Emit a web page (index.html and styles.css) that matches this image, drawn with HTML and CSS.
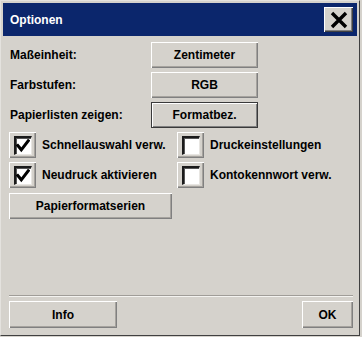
FILE: index.html
```html
<!DOCTYPE html>
<html>
<head>
<meta charset="utf-8">
<link rel="stylesheet" href="styles.css">
</head>
<body>
<div class="window">
  <div class="titlebar">
    <span class="title">Optionen</span>
    <button class="close"><svg width="18" height="18" viewBox="0 0 18 18"><path d="M2 2 L16 16 M16 2 L2 16" stroke="#000" stroke-width="3.4" fill="none"/></svg></button>
  </div>
  <div class="content">
    <div class="settings">
      <div class="label">Maßeinheit:</div><button class="btn">Zentimeter</button>
      <div class="label">Farbstufen:</div><button class="btn">RGB</button>
      <div class="label">Papierlisten zeigen:</div><button class="btn default">Formatbez.</button>
    </div>
    <div class="checks">
      <div class="check"><span class="cb"><span class="box"><svg width="14" height="14" viewBox="0 0 14 14"><path d="M1.8 6.5 L5.3 10.8 L12.2 1.8" stroke="#000" stroke-width="3" fill="none" stroke-linecap="square"/></svg></span></span><span>Schnellauswahl verw.</span></div>
      <div class="check"><span class="cb"><span class="box"></span></span><span>Druckeinstellungen</span></div>
      <div class="check"><span class="cb"><span class="box"><svg width="14" height="14" viewBox="0 0 14 14"><path d="M1.8 6.5 L5.3 10.8 L12.2 1.8" stroke="#000" stroke-width="3" fill="none" stroke-linecap="square"/></svg></span></span><span>Neudruck aktivieren</span></div>
      <div class="check"><span class="cb"><span class="box"></span></span><span>Kontokennwort verw.</span></div>
    </div>
    <button class="btn series">Papierformatserien</button>
    <div class="spacer"></div>
    <div class="sep"></div>
    <div class="footer">
      <button class="btn info">Info</button>
      <button class="btn ok">OK</button>
    </div>
  </div>
</div>
</body>
</html>
```
FILE: styles.css
```css
html, body {
  margin: 0;
  padding: 0;
  background: #d5d2cc;
}
body {
  font-family: "Liberation Sans", Arial, sans-serif;
  font-size: 12px;
  font-weight: bold;
  color: #000;
}
.window {
  width: 360px;
  height: 336px;
  box-sizing: border-box;
  border: 1px solid;
  border-color: #e4e2de #404040 #404040 #e4e2de;
  padding: 2px;
  display: flex;
  flex-direction: column;
  background: #d5d2cc;
}
.titlebar {
  height: 33px;
  flex: none;
  background: #0b266c;
  display: flex;
  align-items: center;
  justify-content: space-between;
  padding: 0 4px 0 7px;
}
.title {
  color: #fff;
  font-size: 12px;
  font-weight: bold;
}
.close {
  width: 29px;
  height: 25px;
  padding: 0;
  margin: 0;
  border: none;
  background: #d5d2cc;
  box-shadow: inset 1px 1px #fff, inset -1px -1px #404040, inset -2px -2px #808080;
  display: flex;
  align-items: center;
  justify-content: center;
}
.close svg { display: block; }
.content {
  flex: 1;
  display: flex;
  flex-direction: column;
  padding: 0 4px 5px 6px;
}
.settings {
  margin-top: 6px;
  display: grid;
  grid-template-columns: 142px 107px;
  grid-auto-rows: 26px;
  row-gap: 4px;
  align-items: center;
}
.label {
  padding-left: 1px;
}
.btn {
  font-family: inherit;
  font-size: 12px;
  font-weight: bold;
  color: #000;
  margin: 0;
  padding: 0;
  border: none;
  background: #d5d2cc;
  box-shadow: inset 1px 1px #fff, inset -1px -1px #808080, inset -2px -2px #a6a39e;
  height: 26px;
  width: 107px;
  text-align: center;
}
.btn.default {
  box-shadow: inset 0 0 0 1px #3a3a3a, inset 2px 2px #fff, inset -2px -2px #808080;
}
.checks {
  margin-top: 4px;
  display: grid;
  grid-template-columns: 168px 1fr;
  grid-auto-rows: 26px;
  row-gap: 4px;
}
.check {
  display: flex;
  align-items: center;
  gap: 6px;
}
.cb {
  width: 27px;
  height: 26px;
  box-sizing: border-box;
  background: #d5d2cc;
  box-shadow: inset 1px 1px #fff, inset -1px -1px #808080, inset -2px -2px #a6a39e;
  display: flex;
  align-items: center;
  justify-content: center;
}
.box {
  width: 18px;
  height: 19px;
  box-sizing: border-box;
  background: #fff;
  border-style: solid;
  border-width: 2px 1px 1px 2px;
  border-color: #1a1a1a #e8e6e2 #e8e6e2 #1a1a1a;
  box-shadow: inset 1px 1px #555;
  display: flex;
  align-items: flex-end;
  justify-content: center;
  padding-bottom: 1px;
}
.box svg { display: block; }
.series {
  margin-top: 5px;
  width: 163px;
}
.spacer { flex: 1; }
.sep {
  border-top: 1px solid #a09d98;
  border-bottom: 1px solid #f4f3f0;
  height: 0;
  margin-bottom: 4px;
}
.footer {
  display: flex;
  justify-content: space-between;
}
.info {
  width: 108px;
  height: 27px;
}
.ok {
  width: 51px;
  height: 27px;
}
```
